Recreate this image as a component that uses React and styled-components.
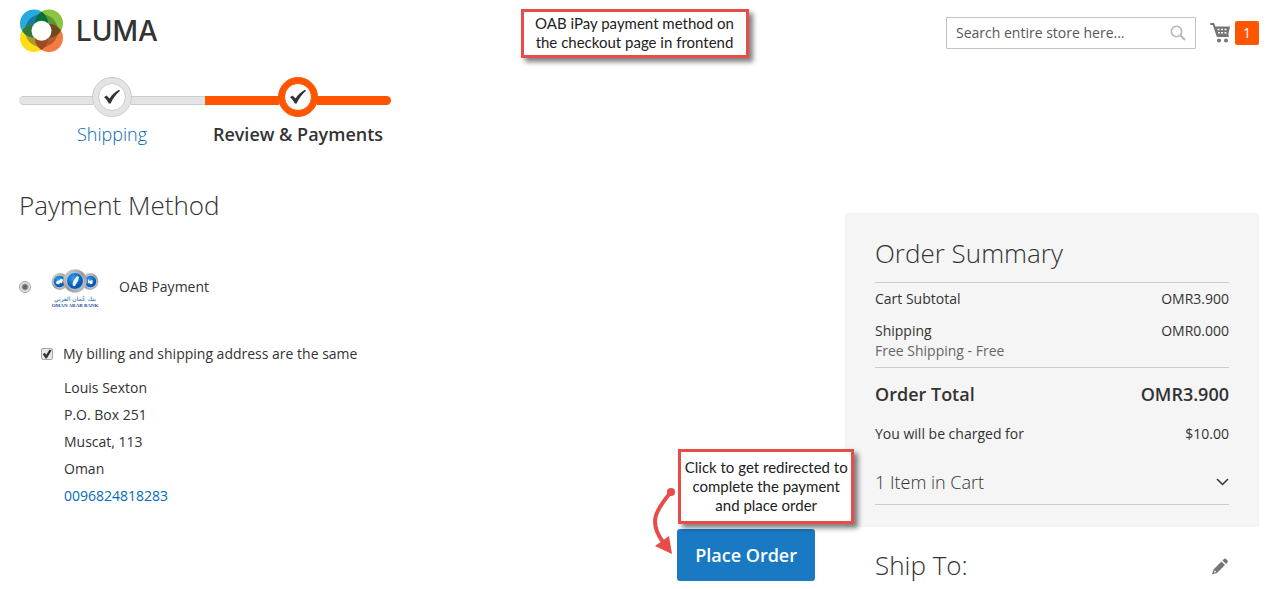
import React from "react";
import styled, { createGlobalStyle } from "styled-components";

const GlobalStyle = createGlobalStyle`
  * { box-sizing: border-box; }
  body {
    margin: 0;
    background: #fff;
    color: #333;
    font: 400 14px/20px "Open Sans", "Noto Sans", sans-serif;
  }
  h1, h2, p, ol, address { margin: 0; padding: 0; font-style: normal; }
  a { color: #006bb4; text-decoration: none; }
`;

const Page = styled.div`
  position: relative;
`;

const Header = styled.header`
  display: flex;
  align-items: flex-start;
  justify-content: space-between;
  padding: 9px 10px 0 19px;
`;

const Logo = styled.a`
  display: flex;
  align-items: center;
  gap: 13px;
  color: #333;
  font: 500 28px/44px Inter, Lato, sans-serif;
`;

const HeaderTools = styled.div`
  display: flex;
  align-items: center;
  gap: 14px;
  padding-top: 8px;
`;

const Search = styled.form`
  display: flex;
  align-items: center;
  width: 250px;
  height: 32px;
  padding: 0 9px;
  border: 1px solid #c2c2c2;
  border-radius: 1px;
`;

const SearchInput = styled.input`
  flex: 1;
  min-width: 0;
  padding: 0;
  border: 0;
  outline: 0;
  background: none;
  font: inherit;
  color: #333;
  &::placeholder { color: #575757; opacity: 1; }
`;

const IconButton = styled.button`
  display: flex;
  padding: 0;
  border: 0;
  background: none;
  cursor: pointer;
`;

const CartLink = styled.a`
  display: flex;
  align-items: center;
  gap: 4px;
`;

const CartCount = styled.span`
  width: 24px;
  border-radius: 2px;
  background: #ff5501;
  color: #fff;
  line-height: 24px;
  text-align: center;
`;

const Progress = styled.ol`
  display: grid;
  grid-template-columns: repeat(2, 186px);
  margin: 24px 19px 0;
  list-style: none;
`;

const Step = styled.li`
  color: ${(p) => (p.$active ? "#333" : "#006bb4")};
  font-size: 18px;
  font-weight: ${(p) => (p.$active ? 600 : 300)};
  line-height: 24px;
  text-align: center;
  a { color: inherit; }
`;

const Track = styled.div`
  display: flex;
  align-items: center;
  height: 40px;
  margin-bottom: 5px;
`;

const Bar = styled.span`
  flex: 1;
  height: 9px;
  margin-top: 7px;
  background: ${(p) => (p.$active ? "#ff5501" : "#e4e4e4")};
  border: solid ${(p) => (p.$active ? "#ff5501" : "#ccc")};
  border-width: 1px 0;
  border-radius: ${(p) => (p.$end === "left" ? "5px 0 0 5px" : p.$end === "right" ? "0 5px 5px 0" : "0")};
`;

const Dot = styled.span`
  display: flex;
  align-items: center;
  justify-content: center;
  width: 40px;
  height: 40px;
  margin: 0 -1px;
  z-index: 1;
  border: 1px solid ${(p) => (p.$active ? "#ff5501" : "#ccc")};
  border-radius: 50%;
  background: ${(p) => (p.$active ? "#ff5501" : "#e4e4e4")};
`;

const DotCenter = styled.span`
  display: flex;
  align-items: center;
  justify-content: center;
  width: 28px;
  height: 28px;
  border: 1px solid ${(p) => (p.$active ? "#ff5501" : "#ccc")};
  border-radius: 50%;
  background: #fff;
`;

const Columns = styled.div`
  display: grid;
  grid-template-columns: minmax(0, 1fr) 414px;
  gap: 30px;
  padding: 0 10px 0 19px;
`;

const Main = styled.main`
  padding-top: 41px;
`;

const Title = styled.h1`
  font-size: 26px;
  font-weight: 300;
  line-height: 36px;
`;

const Method = styled.label`
  display: flex;
  align-items: center;
  width: fit-content;
  margin-top: 42px;
`;

const Radio = styled.input`
  appearance: none;
  width: 12px;
  height: 12px;
  margin: 0 20px 0 0;
  border: 1px solid #a0a0a0;
  border-radius: 50%;
  background: radial-gradient(circle, #666 0 2px, #e6e6e6 4px);
`;

const MethodName = styled.span`
  margin-left: 20px;
`;

const SameAddress = styled.label`
  display: flex;
  align-items: center;
  gap: 10px;
  width: fit-content;
  margin: 35px 0 0 22px;
`;

const Checkbox = styled.input`
  appearance: none;
  width: 12px;
  height: 12px;
  margin: 0;
  border: 1px solid #a6a6a6;
  border-radius: 2px;
  background: #e8e8e8;
  &:checked::before {
    content: "";
    display: block;
    height: 10px;
    background: #333;
    clip-path: polygon(8% 52%, 28% 38%, 42% 58%, 76% 4%, 96% 16%, 48% 96%, 36% 96%);
  }
`;

const Address = styled.address`
  margin: 10px 0 0 45px;
  line-height: 27px;
`;

const Actions = styled.div`
  display: flex;
  justify-content: flex-end;
  margin-top: 20px;
`;

const ButtonWrap = styled.div`
  position: relative;
`;

const PrimaryButton = styled.button`
  padding: 13px 18px;
  border: 0;
  border-radius: 3px;
  background: #1979c3;
  color: #fff;
  font: 600 18px/26px "Open Sans", sans-serif;
  cursor: pointer;
`;

const Callout = styled.p`
  position: absolute;
  z-index: 2;
  border: 3px solid #e84c48;
  background: #fff;
  box-shadow: 4px 4px 5px rgba(0, 0, 0, 0.5);
  color: #222;
  font: 400 15px/19px Lato, sans-serif;
  text-align: center;
`;

const PageCallout = styled(Callout)`
  top: 9px;
  left: 50%;
  width: 228px;
  padding: 2px 6px 3px;
  transform: translateX(-50%);
`;

const ButtonCallout = styled(Callout)`
  bottom: 100%;
  left: 1px;
  width: 176px;
  margin-bottom: 5px;
  padding: 6px 0;
`;

const Arrow = styled.svg`
  position: absolute;
  top: -43px;
  right: 100%;
`;

const Aside = styled.aside`
  padding-top: 67px;
`;

const Summary = styled.section`
  padding: 22px 30px;
  background: #f5f5f5;
`;

const SummaryTitle = styled(Title).attrs({ as: "h2" })`
  padding-bottom: 11px;
  border-bottom: 1px solid #ccc;
`;

const Totals = styled.table`
  width: 100%;
  border-collapse: collapse;
`;

const TotalRow = styled.tr`
  th, td {
    padding: 6px 0;
    font-weight: 400;
    text-align: left;
    vertical-align: top;
  }
  td { text-align: right; }
`;

const GrandRow = styled(TotalRow)`
  border-top: 1px solid #ccc;
  th, td {
    padding: 14px 0 10px;
    font-size: 18px;
    font-weight: 600;
    line-height: 24px;
  }
`;

const ChargeRow = styled(TotalRow)`
  th, td { padding: 8px 0; }
`;

const Muted = styled.span`
  display: block;
  color: #666;
`;

const CartToggle = styled.button`
  display: flex;
  align-items: center;
  justify-content: space-between;
  width: 100%;
  margin-top: 18px;
  padding: 0 0 10px;
  border: 0;
  border-bottom: 1px solid #ccc;
  background: none;
  color: #333;
  font: 300 18px/24px "Open Sans", sans-serif;
  cursor: pointer;
`;

const ShipTo = styled.section`
  display: flex;
  align-items: center;
  justify-content: space-between;
  padding: 20px 30px 0;
`;

function LumaMark() {
  return (
    <svg width="44" height="44" viewBox="0 0 44 44" aria-hidden="true">
      <defs>
        <clipPath id="ring"><circle cx="22.500" cy="21.700" r="16.500" /></clipPath>
        <clipPath id="tl"><circle cx="15" cy="14.500" r="14" /></clipPath>
        <clipPath id="bl"><circle cx="15" cy="29" r="14" /></clipPath>
        <clipPath id="tr"><circle cx="30" cy="14.500" r="14" /></clipPath>
      </defs>
      <circle cx="15" cy="14.500" r="14" fill="#27a9e1" />
      <circle cx="30" cy="14.500" r="14" fill="#8bc540" />
      <circle cx="15" cy="29" r="14" fill="#fedd17" />
      <circle cx="30" cy="29" r="14" fill="#f47b3f" />
      <g clipPath="url(#ring)">
        <circle cx="15" cy="14.500" r="14" fill="#1379a5" />
        <circle cx="30" cy="14.500" r="14" fill="#5f9438" />
        <circle cx="15" cy="29" r="14" fill="#a99a2e" />
        <circle cx="30" cy="29" r="14" fill="#b45a2e" />
      </g>
      <circle cx="30" cy="14.500" r="14" fill="#04713a" clipPath="url(#tl)" />
      <circle cx="15" cy="29" r="14" fill="#2d7a3c" clipPath="url(#tl)" />
      <circle cx="30" cy="29" r="14" fill="#6d4a1e" clipPath="url(#tr)" />
      <circle cx="30" cy="29" r="14" fill="#a04a24" clipPath="url(#bl)" />
      <circle cx="22.500" cy="21.700" r="10" fill="#fff" />
    </svg>
  );
}

function Check() {
  return (
    <svg width="18" height="16" viewBox="0 0 18 16" aria-hidden="true">
      <path d="M1 8.2 3.5 6.4 6.6 9.4 C9 6 12 2.8 16 .8 L17 1.8 C13 5 10 9.500 7.600 14.500 L5.800 14.500 C4.600 12 3 9.800 1 8.200Z" fill="#333" />
    </svg>
  );
}

function BankLogo() {
  return (
    <svg width="48" height="44" viewBox="0 0 48 44" role="img" aria-label="Oman Arab Bank">
      <defs>
        <radialGradient id="blue" cx=".4" cy=".35">
          <stop offset="0" stopColor="#35a0ea" />
          <stop offset="1" stopColor="#0759b4" />
        </radialGradient>
        <linearGradient id="silver" x1="0" x2="1" y1="0" y2="1">
          <stop offset="0" stopColor="#ddd" />
          <stop offset=".5" stopColor="#999" />
          <stop offset="1" stopColor="#c8c8c8" />
        </linearGradient>
      </defs>
      <circle cx="9" cy="16.500" r="8.500" fill="url(#silver)" />
      <circle cx="39" cy="16.500" r="8.500" fill="url(#silver)" />
      <circle cx="8.500" cy="16.500" r="6.200" fill="url(#blue)" stroke="#eee" strokeWidth=".6" />
      <circle cx="39.500" cy="16.500" r="6.200" fill="url(#blue)" stroke="#eee" strokeWidth=".6" />
      <circle cx="24" cy="16" r="11.800" fill="url(#silver)" />
      <circle cx="24" cy="16" r="8.400" fill="url(#blue)" stroke="#eee" strokeWidth=".6" />
      <path d="M5 18.500c0-2 1-3 3-3l2-2 2 1-1 4-2-1-1 2z" fill="#fff" />
      <path d="M37 14l1.500 2 3-1v3.500l-2 .8-1-1.500-1.500.8z" fill="#fff" />
      <path d="M22 21c-1-3 0-4 1-6l3-4 2 1-1 4-2 3-1 2z" fill="#e9f5ff" />
      <text x="24" y="36" textAnchor="middle" fill="#1a5fae" fontFamily="DejaVu Sans, sans-serif" fontSize="6" fontWeight="400">بنك عُمان العربي</text>
      <text x="24" y="42" textAnchor="middle" fill="#1a4f9c" fontFamily="Liberation Serif, serif" fontSize="5" fontWeight="700">OMAN ARAB BANK</text>
    </svg>
  );
}

function CartIcon() {
  return (
    <svg width="21" height="22" viewBox="0 0 21 22" aria-hidden="true">
      <path d="M1 2h2.500L7.500 14h10.500" fill="none" stroke="#757575" strokeWidth="2" strokeLinecap="round" strokeLinejoin="round" />
      <path d="M4.500 4.500H20l-2 9.500H7.500z" fill="#757575" />
      <path d="M7.500 7.500h2M11 7.500h2M14.500 7.500h2M8 10.800h1.800M11 10.800h2M14.500 10.800h2" stroke="#fff" strokeWidth="1.400" />
      <circle cx="9" cy="18.500" r="2" fill="#757575" />
      <circle cx="16" cy="18.500" r="2" fill="#757575" />
    </svg>
  );
}

function ProgressStep({ active, children }) {
  return (
    <Step $active={active} aria-current={active ? "step" : undefined}>
      <Track>
        <Bar $active={active} $end={active ? undefined : "left"} />
        <Dot $active={active}>
          <DotCenter $active={active}><Check /></DotCenter>
        </Dot>
        <Bar $active={active} $end={active ? "right" : undefined} />
      </Track>
      {children}
    </Step>
  );
}

export default function App() {
  return (
    <Page>
      <GlobalStyle />
      <Header>
        <Logo href="#home"><LumaMark />LUMA</Logo>
        <HeaderTools>
          <Search role="search">
            <SearchInput aria-label="Search" placeholder="Search entire store here..." />
            <IconButton type="submit" aria-label="Search">
              <svg width="16" height="16" viewBox="0 0 16 16" fill="none" stroke="#b8b8b8" aria-hidden="true">
                <circle cx="6.500" cy="6.500" r="5.200" strokeWidth="1.600" />
                <path d="M10.500 10.500 15 15" strokeWidth="2.200" />
              </svg>
            </IconButton>
          </Search>
          <CartLink href="#cart" aria-label="My cart, 1 item">
            <CartIcon />
            <CartCount>1</CartCount>
          </CartLink>
        </HeaderTools>
      </Header>
      <PageCallout>OAB iPay payment method on the checkout page in frontend</PageCallout>

      <Progress>
        <ProgressStep><a href="#shipping">Shipping</a></ProgressStep>
        <ProgressStep active>Review &amp; Payments</ProgressStep>
      </Progress>

      <Columns>
        <Main>
          <Title>Payment Method</Title>
          <Method>
            <Radio type="radio" name="method" defaultChecked />
            <BankLogo />
            <MethodName>OAB Payment</MethodName>
          </Method>
          <SameAddress>
            <Checkbox type="checkbox" defaultChecked />
            My billing and shipping address are the same
          </SameAddress>
          <Address>
            Louis Sexton<br />
            P.O. Box 251<br />
            Muscat, 113<br />
            Oman<br />
            <a href="tel:0096824818283">0096824818283</a>
          </Address>
          <Actions>
            <ButtonWrap>
              <ButtonCallout>Click to get redirected to complete the payment and place order</ButtonCallout>
              <Arrow width="28" height="72" viewBox="0 0 28 72" aria-hidden="true">
                <path d="M22 6C7 24-1 36 14 56" fill="none" stroke="#e84c48" strokeWidth="4" />
                <circle cx="22" cy="6" r="4" fill="#e84c48" />
                <path d="M23 68 6 60 20 50Z" fill="#e84c48" />
              </Arrow>
              <PrimaryButton type="button">Place Order</PrimaryButton>
            </ButtonWrap>
          </Actions>
        </Main>

        <Aside>
          <Summary>
            <SummaryTitle>Order Summary</SummaryTitle>
            <Totals>
              <tbody>
                <TotalRow><th scope="row">Cart Subtotal</th><td>OMR3.900</td></TotalRow>
                <TotalRow>
                  <th scope="row">Shipping<Muted>Free Shipping - Free</Muted></th>
                  <td>OMR0.000</td>
                </TotalRow>
                <GrandRow><th scope="row">Order Total</th><td>OMR3.900</td></GrandRow>
                <ChargeRow><th scope="row">You will be charged for</th><td>$10.00</td></ChargeRow>
              </tbody>
            </Totals>
            <CartToggle type="button" aria-expanded="false">
              1 Item in Cart
              <svg width="13" height="8" viewBox="0 0 13 8" fill="none" stroke="#333" strokeWidth="1.500" aria-hidden="true">
                <path d="M1 1l5.500 5.500L12 1" />
              </svg>
            </CartToggle>
          </Summary>
          <ShipTo>
            <Title as="h2">Ship To:</Title>
            <IconButton type="button" aria-label="Edit shipping address">
              <svg width="17" height="20" viewBox="0 0 17 20" fill="#757575" aria-hidden="true">
                <path d="M0 19.500 1.500 14.500 9.500 6.500 13 10 5 18Z M10.500 5.500 12 4q1-.8 2 0l1.500 1.500q.8 1 0 2L14 9Z" />
                <path d="M2 17.600 2.700 15.300 4.500 16.900Z" fill="#fff" />
              </svg>
            </IconButton>
          </ShipTo>
        </Aside>
      </Columns>
    </Page>
  );
}
